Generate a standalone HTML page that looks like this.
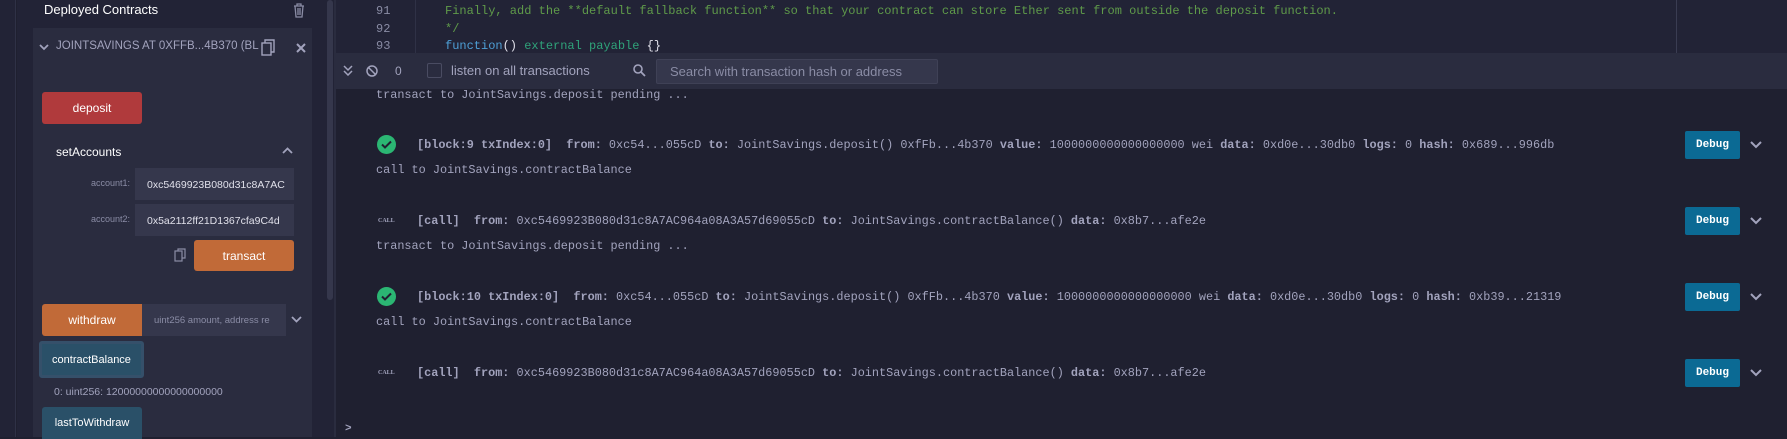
<!DOCTYPE html><html><head><style>
*{margin:0;padding:0;box-sizing:border-box}
body{width:1787px;height:437px;overflow:hidden;background:#1f2030;font-family:"Liberation Sans",sans-serif;position:relative;color:#a2a3bd}
.a{position:absolute}
.mono{font-family:"Liberation Mono",monospace}
.btn{position:absolute;color:#fff;font-size:12px;display:flex;align-items:center;justify-content:center;border-radius:3px}
.t{font-size:11.85px;white-space:pre;color:#a2a3bd}
.t b{color:#a2a3bd}
.dbg{position:absolute;left:1685px;width:55px;height:28px;background:#0b6a94;color:#fff;font:bold 11px "Liberation Mono",monospace;display:flex;align-items:center;justify-content:center;border-radius:2px}
.chev{position:absolute;left:1749px;width:14px;height:10px}
.ck{position:absolute;left:377px;width:19px;height:19px;border-radius:50%;background:#2bb673}
.call{position:absolute;left:378px;font:bold 6px "Liberation Serif",serif;color:#a2a3bd}
</style></head><body>
<div class="a" style="left:0;top:0;width:16px;height:437px;background:#222336;border-right:1px solid #2f3146"></div>
<div class="a" style="left:17px;top:0;width:309px;height:437px;background:#222336"></div>
<div class="a" style="left:326px;top:0;width:9px;height:437px;background:#222336"></div>
<div class="a" style="left:327px;top:0;width:6px;height:300px;background:#35374c;border-radius:3px"></div>
<div class="a" style="left:334px;top:0;width:2px;height:437px;background:#2a2c3f"></div>
<div class="a" style="left:44px;top:2px;font-size:13px;color:#fff">Deployed Contracts</div>
<svg class="a" style="left:293px;top:3px" width="12" height="15" viewBox="0 0 12 15"><path d="M1 3h10M4 3V1h4v2M2 3l1 11h6l1-11M5 5v7M7 5v7" stroke="#8a8ca5" stroke-width="1.3" fill="none"/></svg>
<div class="a" style="left:33px;top:28px;width:279px;height:409px;background:#2a2c3f"></div>
<svg class="a" style="left:39px;top:44px" width="10" height="7"><path d="M1 1l4 4 4-4" stroke="#a2a3bd" stroke-width="1.8" fill="none"/></svg>
<div class="a" style="left:56px;top:40px;font-size:11.5px;color:#a2a3bd;white-space:nowrap">JOINTSAVINGS AT 0XFFB...4B370 (BL</div>
<svg class="a" style="left:261px;top:39px" width="15" height="17"><rect x="1" y="4" width="9" height="12" fill="none" stroke="#a2a3bd" stroke-width="1.4"/><path d="M4 4V1h9v12h-3" fill="none" stroke="#a2a3bd" stroke-width="1.4"/></svg>
<svg class="a" style="left:296px;top:43px" width="10" height="10"><path d="M1 1l8 8M9 1l-8 8" stroke="#a2a3bd" stroke-width="2"/></svg>
<div class="btn" style="left:42px;top:92px;width:100px;height:32px;background:#b03a3c">deposit</div>
<div class="a" style="left:56px;top:145px;font-size:12px;color:#fff">setAccounts</div>
<svg class="a" style="left:282px;top:147px" width="11" height="7"><path d="M1 6l4.5-4.5L10 6" stroke="#a2a3bd" stroke-width="1.8" fill="none"/></svg>
<div class="a" style="left:60px;top:178px;width:70px;text-align:right;font-size:9px;color:#8a8ca5">account1:</div>
<div class="a" style="left:135px;top:168px;width:159px;height:32px;background:#35374c;font-size:10.5px;color:#e0e0ea;padding:11px 0 0 12px;overflow:hidden;white-space:nowrap">0xc5469923B080d31c8A7AC</div>
<div class="a" style="left:60px;top:214px;width:70px;text-align:right;font-size:9px;color:#8a8ca5">account2:</div>
<div class="a" style="left:135px;top:204px;width:159px;height:32px;background:#35374c;font-size:10.5px;color:#e0e0ea;padding:11px 0 0 12px;overflow:hidden;white-space:nowrap">0x5a2112ff21D1367cfa9C4d</div>
<svg class="a" style="left:174px;top:248px" width="12" height="14"><rect x="1" y="3" width="7" height="10" fill="none" stroke="#8a8ca5" stroke-width="1.2"/><path d="M4 3V1h7v9H8" fill="none" stroke="#8a8ca5" stroke-width="1.2"/></svg>
<div class="btn" style="left:194px;top:240px;width:100px;height:31px;background:#c16a38">transact</div>
<div class="btn" style="left:42px;top:304px;width:100px;height:32px;background:#c16a38;border-radius:3px 0 0 3px">withdraw</div>
<div class="a" style="left:142px;top:304px;width:144px;height:32px;background:#35374c;font-size:9.5px;color:#8a8ca5;padding:11px 0 0 12px;white-space:nowrap;overflow:hidden">uint256 amount, address re</div>
<svg class="a" style="left:291px;top:316px" width="11" height="7"><path d="M1 1l4.5 4.5L10 1" stroke="#a2a3bd" stroke-width="1.8" fill="none"/></svg>
<div class="btn" style="left:39px;top:341px;width:105px;height:37px;background:#2a5068;border:3px solid #35506a;font-size:11px">contractBalance</div>
<div class="a" style="left:54px;top:386px;font-size:10.5px;color:#a2a3bd">0: uint256: 12000000000000000000</div>
<div class="btn" style="left:42px;top:407px;width:100px;height:32px;background:#2a5068;font-size:11px;border-radius:3px 3px 0 0">lastToWithdraw</div>
<div class="a" style="left:336px;top:0;width:1451px;height:53px;background:#222336"></div>
<div class="a" style="left:336px;top:0;width:80px;height:53px;background:#222336;border-right:1px solid #2f3146"></div>
<div class="a mono" style="left:376px;top:3px;font-size:12px;line-height:17.5px;color:#8a8ca5">91<br>92<br>93</div>
<div class="a mono" style="left:445px;top:3px;font-size:12px;line-height:17.5px;white-space:pre;color:#5f9a4a">Finally, add the **default fallback function** so that your contract can store Ether sent from outside the deposit function.
*/
<span style="color:#4e9fd6">function</span><span style="color:#e0e0ea">()</span> <span style="color:#2fa37a">external payable</span> <span style="color:#e0e0ea">{}</span></div>
<div class="a" style="left:1676px;top:0;width:1px;height:53px;background:#3a3c52"></div>
<div class="a" style="left:336px;top:53px;width:1451px;height:36px;background:#2a2c3f"></div>
<svg class="a" style="left:343px;top:65px" width="10" height="11"><path d="M1 1l4 4 4-4M1 6l4 4 4-4" stroke="#a2a3bd" stroke-width="1.5" fill="none"/></svg>
<svg class="a" style="left:366px;top:65px" width="12" height="12"><circle cx="6" cy="6" r="5" stroke="#a2a3bd" stroke-width="1.5" fill="none"/><path d="M2.5 2.5l7 7" stroke="#a2a3bd" stroke-width="1.5"/></svg>
<div class="a" style="left:395px;top:64px;font-size:12px">0</div>
<div class="a" style="left:427px;top:63px;width:15px;height:15px;border:1px solid #4a4c62;border-radius:2px;background:#2a2c3f"></div>
<div class="a" style="left:451px;top:63px;font-size:13px;color:#a2a3bd">listen on all transactions</div>
<svg class="a" style="left:633px;top:64px" width="13" height="13"><circle cx="5" cy="5" r="4" stroke="#a2a3bd" stroke-width="1.6" fill="none"/><path d="M8 8l4 4" stroke="#a2a3bd" stroke-width="1.8"/></svg>
<div class="a" style="left:656px;top:59px;width:282px;height:25px;background:#35374c;border:1px solid #3f4156;border-radius:2px;font-size:13px;color:#8a8ca5;padding:4px 0 0 13px">Search with transaction hash or address</div>
<div class="a t mono" style="left:376px;top:88px">transact to JointSavings.deposit pending ...</div>
<div class="ck" style="top:135px"></div><svg class="a" style="left:381px;top:140px" width="11" height="9"><path d="M1 4.5l3 3L10 1.5" stroke="#1f2030" stroke-width="2" fill="none"/></svg>
<div class="a t mono" style="left:417px;top:138px"><b>[block:9 txIndex:0]</b>  <b>from:</b> 0xc54...055cD <b>to:</b> JointSavings.deposit() 0xfFb...4b370 <b>value:</b> 1000000000000000000 wei <b>data:</b> 0xd0e...30db0 <b>logs:</b> 0 <b>hash:</b> 0x689...996db</div>
<div class="dbg" style="top:131px">Debug</div><svg class="chev" style="top:140px"><path d="M2 2l5 5 5-5" stroke="#a2a3bd" stroke-width="2" fill="none"/></svg>
<div class="a t mono" style="left:376px;top:163px">call to JointSavings.contractBalance</div>
<div class="call" style="top:218px">CALL</div>
<div class="a t mono" style="left:417px;top:214px"><b>[call]</b>  <b>from:</b> 0xc5469923B080d31c8A7AC964a08A3A57d69055cD <b>to:</b> JointSavings.contractBalance() <b>data:</b> 0x8b7...afe2e</div>
<div class="dbg" style="top:207px">Debug</div><svg class="chev" style="top:216px"><path d="M2 2l5 5 5-5" stroke="#a2a3bd" stroke-width="2" fill="none"/></svg>
<div class="a t mono" style="left:376px;top:239px">transact to JointSavings.deposit pending ...</div>
<div class="ck" style="top:287px"></div><svg class="a" style="left:381px;top:292px" width="11" height="9"><path d="M1 4.5l3 3L10 1.5" stroke="#1f2030" stroke-width="2" fill="none"/></svg>
<div class="a t mono" style="left:417px;top:290px"><b>[block:10 txIndex:0]</b>  <b>from:</b> 0xc54...055cD <b>to:</b> JointSavings.deposit() 0xfFb...4b370 <b>value:</b> 1000000000000000000 wei <b>data:</b> 0xd0e...30db0 <b>logs:</b> 0 <b>hash:</b> 0xb39...21319</div>
<div class="dbg" style="top:283px">Debug</div><svg class="chev" style="top:292px"><path d="M2 2l5 5 5-5" stroke="#a2a3bd" stroke-width="2" fill="none"/></svg>
<div class="a t mono" style="left:376px;top:315px">call to JointSavings.contractBalance</div>
<div class="call" style="top:370px">CALL</div>
<div class="a t mono" style="left:417px;top:366px"><b>[call]</b>  <b>from:</b> 0xc5469923B080d31c8A7AC964a08A3A57d69055cD <b>to:</b> JointSavings.contractBalance() <b>data:</b> 0x8b7...afe2e</div>
<div class="dbg" style="top:359px">Debug</div><svg class="chev" style="top:368px"><path d="M2 2l5 5 5-5" stroke="#a2a3bd" stroke-width="2" fill="none"/></svg>
<div class="a mono" style="left:345px;top:423px;font-size:11px;font-weight:bold;color:#a2a3bd">&gt;</div>
</body></html>
